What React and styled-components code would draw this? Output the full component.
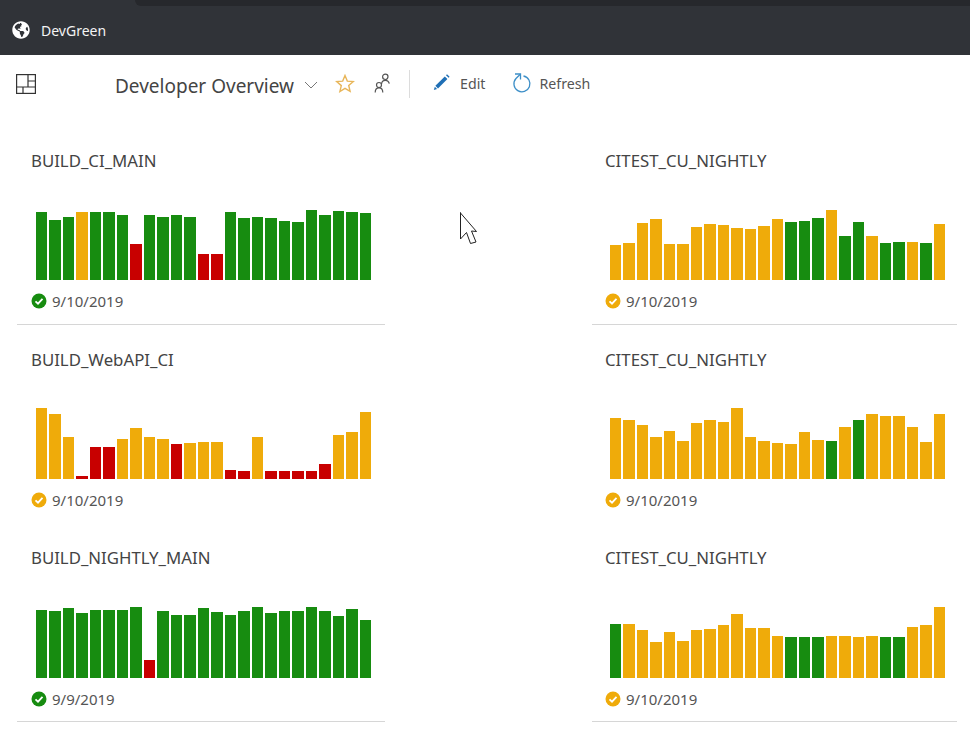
import styled, { createGlobalStyle } from "styled-components";
import { FaGlobeAmericas } from "react-icons/fa";

const GlobalStyle = createGlobalStyle`
  html, body {
    margin: 0;
    background: #fff;
    font-family: "Noto Sans", "Open Sans", sans-serif;
    overflow: hidden;
  }
`;

const COLORS = { g: "#178c10", y: "#efab0a", r: "#c80000" };

const tiles = [
  {
    name: "BUILD_CI_MAIN",
    date: "9/10/2019",
    status: "g",
    divider: true,
    bars: [68, 60, 63, 68, 68, 68, 65, 36, 65, 63, 65, 63, 26, 26, 68, 62, 63, 62, 59, 58, 70, 65, 69, 68, 67],
    colors: "gggygggrggggrrggggggggggg",
  },
  {
    name: "CITEST_CU_NIGHTLY",
    date: "9/10/2019",
    status: "y",
    divider: true,
    bars: [35, 37, 57, 61, 36, 36, 53, 56, 55, 52, 51, 54, 61, 58, 59, 62, 70, 44, 58, 44, 37, 38, 38, 37, 56],
    colors: "yyyyyyyyyyyyygggyggyggygy",
  },
  {
    name: "BUILD_WebAPI_CI",
    date: "9/10/2019",
    status: "y",
    bars: [71, 65, 42, 3, 32, 32, 40, 51, 42, 40, 35, 36, 37, 37, 9, 8, 42, 8, 8, 8, 8, 15, 44, 47, 67],
    colors: "yyyrrryyyyryyyrryrrrrryyy",
  },
  {
    name: "CITEST_CU_NIGHTLY",
    date: "9/10/2019",
    status: "y",
    bars: [61, 59, 54, 42, 48, 38, 56, 59, 57, 71, 42, 38, 36, 35, 47, 39, 38, 52, 59, 65, 63, 63, 52, 37, 65],
    colors: "yyyyyyyyyyyyyyyygygyyyyyy",
  },
  {
    name: "BUILD_NIGHTLY_MAIN",
    date: "9/9/2019",
    status: "g",
    divider: true,
    bars: [68, 67, 70, 65, 68, 68, 68, 71, 18, 67, 63, 63, 70, 66, 63, 67, 71, 65, 67, 67, 71, 67, 62, 69, 58],
    colors: "ggggggggrgggggggggggggggg",
  },
  {
    name: "CITEST_CU_NIGHTLY",
    date: "9/10/2019",
    status: "y",
    divider: true,
    bars: [54, 54, 48, 36, 46, 37, 48, 49, 53, 64, 50, 50, 42, 41, 41, 41, 42, 42, 41, 42, 41, 41, 51, 53, 71],
    colors: "gyyyyyyyyyyyygggyyyyggyyy",
  },
];

const Page = styled.div`
  position: relative;
  width: 970px;
  height: 735px;
  overflow: hidden;
  background: #fff;
`;

const Header = styled.header`
  position: relative;
  display: flex;
  align-items: center;
  gap: 11px;
  height: 55px;
  padding: 5px 0 0 12px;
  box-sizing: border-box;
  background: #303338;
  color: #f4f4f4;
  font-size: 14px;
`;

const TabStrip = styled.div`
  position: absolute;
  top: 0;
  left: 135px;
  right: 0;
  height: 6px;
  background: #26282c;
  border-bottom-left-radius: 8px;
`;

const Toolbar = styled.div`
  display: flex;
  align-items: center;
  height: 60px;
  padding-left: 16px;
  color: #333;
`;

const ViewIcon = styled.svg`
  width: 20px;
  height: 20px;
  margin-top: -2px;
  margin-right: 79px;
`;

const Title = styled.h1`
  margin: 2px 10px 0 0;
  font-size: 19px;
  font-weight: 400;
  line-height: 26px;
  color: #444;
`;

const IconButton = styled.span`
  display: inline-flex;
  margin-left: ${(p) => p.$gap}px;
  margin-top: -4px;
`;

const Separator = styled.div`
  width: 1px;
  height: 28px;
  margin: -2px 0 0 18px;
  background: #dcdcdc;
`;

const Action = styled.button`
  display: flex;
  align-items: center;
  gap: ${(p) => p.$iconGap}px;
  margin-left: ${(p) => p.$gap}px;
  margin-top: -4px;
  padding: 0;
  border: 0;
  background: none;
  font: inherit;
  font-size: 14.2px;
  color: #555;
`;

const TileGrid = styled.main`
  display: grid;
  grid-template-columns: 368px 365px;
  grid-auto-rows: 198.75px;
  column-gap: 207px;
  padding: 10.9px 0 0 17px;
`;

const Tile = styled.section`
  box-sizing: border-box;
  padding: 24px 0 0 ${(p) => p.$inset}px;
  border-bottom: 1px solid ${(p) => (p.$divider ? "#d6d6d6" : "transparent")};
`;

const TileName = styled.h2`
  margin: 0;
  font-size: 16.8px;
  font-weight: 400;
  line-height: 22px;
  color: #444;
`;

const Chart = styled.div`
  display: grid;
  grid-template-columns: repeat(25, 1fr);
  column-gap: 2px;
  align-items: end;
  width: 335.25px;
  height: 72px;
  margin: 36.5px 0 0 5px;
`;

const Bar = styled.div`
  background: ${(p) => COLORS[p.$status]};
`;

const DateRow = styled.div`
  display: flex;
  align-items: center;
  gap: 5px;
  height: 20px;
  margin-top: 11px;
  font-size: 15px;
  color: #555;
`;

const Cursor = styled.svg`
  position: absolute;
  left: 458px;
  top: 210px;
`;

function StatusIcon({ status }) {
  return (
    <svg width="16" height="16" viewBox="0 0 16 16">
      <circle cx="8" cy="8" r="7.5" fill={COLORS[status]} />
      <path d="M4.5 8.3 7 10.7 11.5 5.8" fill="none" stroke="#fff" strokeWidth="1.8" />
    </svg>
  );
}

function BuildTile({ tile, inset }) {
  return (
    <Tile $inset={inset} $divider={tile.divider}>
      <TileName>{tile.name}</TileName>
      <Chart>
        {tile.bars.map((height, i) => (
          <Bar key={i} $status={tile.colors[i]} style={{ height }} />
        ))}
      </Chart>
      <DateRow>
        <StatusIcon status={tile.status} />
        {tile.date}
      </DateRow>
    </Tile>
  );
}

export default function App() {
  return (
    <Page>
      <GlobalStyle />
      <Header>
        <TabStrip />
        <FaGlobeAmericas size={18} color="#fff" />
        DevGreen
      </Header>

      <Toolbar>
        <ViewIcon viewBox="0 0 20 20" fill="none" stroke="#333" strokeWidth="1.2">
          <rect x="0.6" y="0.6" width="18.8" height="18.8" />
          <path d="M12 .6V13M12 7h7.4M.6 13h18.8M7 13v6.4" />
        </ViewIcon>
        <Title>Developer Overview</Title>
        <svg width="14" height="8" viewBox="0 0 14 8" fill="none" stroke="#777" strokeWidth="1">
          <path d="M1 1l6 6 6-6" />
        </svg>
        <IconButton $gap={17}>
          <svg width="20" height="19" viewBox="0 0 20 19" fill="none" stroke="#e8b65a" strokeWidth="1.4">
            <path d="M10 1.5l2.3 5.6 6 .5-4.6 3.9 1.4 5.9L10 14.3 4.9 17.5l1.4-5.9L1.700 7.600l6-.5z" />
          </svg>
        </IconButton>
        <IconButton $gap={18}>
          <svg width="18" height="20" viewBox="0 0 18 20" fill="none" stroke="#555" strokeWidth="1.2">
            <circle cx="12.300" cy="3.800" r="2.700" />
            <path d="M8.500 11c.2-2 1.700-3.700 3.800-3.700s3.600 1.400 4 3.400" />
            <circle cx="6" cy="12" r="2.500" />
            <path d="M2.200 19.500c0-2.600 1.500-4.700 3.800-4.700s3.800 2.100 3.800 4.700" />
          </svg>
        </IconButton>
        <Separator />
        <Action $gap={21} $iconGap={9}>
          <svg width="20" height="20" viewBox="0 0 20 20" fill="#1f6fb5">
            <path d="M13.800 3.400l2.600 2.600L7 15.400l-2.600-2.600z" />
            <path d="M15 2.200l1-1 2.600 2.600-1 1z" />
            <path d="M3.800 13.800l2.300 2.300-3.300 1z" />
          </svg>
          Edit
        </Action>
        <Action $gap={27} $iconGap={7}>
          <svg width="20" height="22" viewBox="0 0 20 22" fill="none" stroke="#3d8fc8" strokeWidth="1.3">
            <path d="M11.500 4A8 8 0 1 1 4 6.500L8 2.500" />
            <path d="M3 2h5.500v5.500" />
          </svg>
          Refresh
        </Action>
      </Toolbar>

      <TileGrid>
        {tiles.map((tile, i) => (
          <BuildTile key={i} tile={tile} inset={i % 2 === 0 ? 14 : 13} />
        ))}
      </TileGrid>

      <Cursor width="24" height="38" viewBox="0 0 24 38">
        <path
          d="M2.500 2.500v26.500l6-6.500 4 11 5.500-1.500-4.500-11 5 .5-16-18.500z"
          fill="#fff"
          stroke="#222"
          strokeWidth="1"
        />
      </Cursor>
    </Page>
  );
}
